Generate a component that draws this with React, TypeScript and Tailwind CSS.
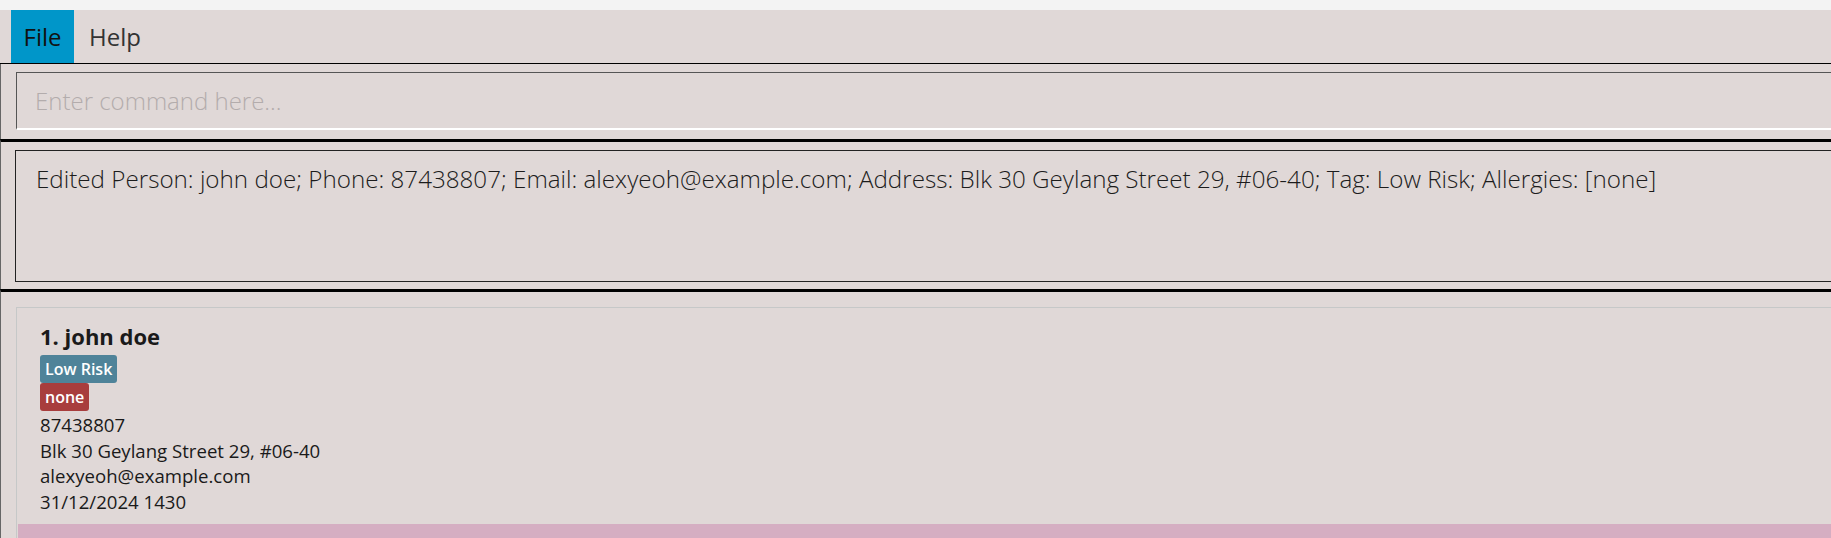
export default function App() {
  const message =
    "Edited Person: john doe; Phone: 87438807; Email: alexyeoh@example.com; Address: Blk 30 Geylang Street 29, #06-40; Tag: Low Risk; Allergies: [none]";

  return (
    <div className="w-[1831px] h-[538px] overflow-hidden bg-[#e0d8d7] font-['Open_Sans',sans-serif] text-[#1a1a1a]">
      {/* window strip */}
      <div className="h-[10px] bg-[#f3f3f3]" />

      {/* menu bar */}
      <div className="h-[54px] flex border-b border-black">
        <div className="ml-[11px] w-[63px] h-[53px] bg-[#0096c9] flex items-center justify-center text-[24px] text-[#111]">
          File
        </div>
        <div className="h-[53px] px-[15px] flex items-center text-[24px] text-[#333]">Help</div>
      </div>

      {/* command box */}
      <div className="h-[75px] border-l border-[#666] pl-[15px] pt-[8px]">
        <div className="w-[1850px] h-[58px] border-t border-l border-[#555] border-b-2 border-b-white flex items-center pl-[18px] text-[24px] font-light text-[#b3acac]">
          Enter command here...
        </div>
      </div>

      {/* result display */}
      <div className="h-[150px] border-t-[3px] border-black border-l border-l-[#666] pl-[14px] pt-[8px]">
        <div className="w-[1850px] h-[132px] border border-[#222] pl-[20px] pt-[12px] text-[24.2px] font-light leading-[32px] whitespace-nowrap text-[#1c1c1c]">
          {message}
        </div>
      </div>

      {/* person list */}
      <div className="h-[262px] border-t-[3px] border-black border-l border-l-[#666] pl-[15px] pt-[15px]">
        <div className="w-[1850px] h-[245px] border-t border-l border-[#c6c8c8] pl-[1px]">
          <div className="pl-[22px] pt-[13px] pb-[10px]">
            <div className="h-[30px] flex items-center text-[22px] font-bold">1. john doe</div>
            <div className="mt-[4px] flex flex-col items-start">
              <span className="h-[28px] px-[5px] rounded-[3px] bg-[#4f8399] text-white text-[16px] font-semibold flex items-center">
                Low Risk
              </span>
              <span className="h-[28px] px-[5px] rounded-[3px] bg-[#a83d3d] text-white text-[16px] font-semibold flex items-center">
                none
              </span>
            </div>
            <div className="mt-[1px] text-[18.6px] leading-[25.5px]">
              <div>87438807</div>
              <div>Blk 30 Geylang Street 29, #06-40</div>
              <div>alexyeoh@example.com</div>
              <div>31/12/2024 1430</div>
            </div>
          </div>
          <div className="h-[40px] bg-[#d5aec2]" />
        </div>
      </div>
    </div>
  );
}
